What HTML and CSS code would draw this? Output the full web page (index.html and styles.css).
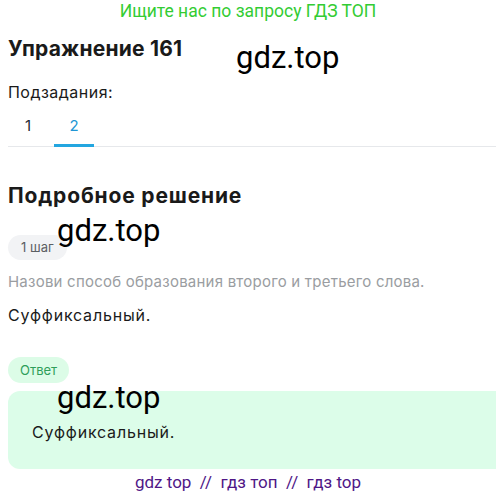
FILE: index.html
```html
<!DOCTYPE html>
<html lang="ru">
<head>
    <meta charset="UTF-8">
    <meta name="viewport" content="width=device-width, initial-scale=1.0">
    <title>Упражнение 161</title>
    <link rel="stylesheet" href="styles.css">
</head>
<body>

    <div class="banner">Ищите нас по запросу ГДЗ ТОП</div>

    <div class="page">
        <h1>Упражнение 161</h1>
        <span class="mark mark-top">gdz.top</span>

        <div class="subtasks">
            <p class="subtasks-title">Подзадания:</p>
            <div class="tabs">
                <span class="tab">1</span>
                <span class="tab active">2</span>
            </div>
        </div>

        <h2>Подробное решение</h2>

        <div class="step">
            <span class="mark mark-step">gdz.top</span>
            <span class="pill">1 шаг</span>
            <p class="hint">Назови способ образования второго и третьего слова.</p>
            <p class="text">Суффиксальный.</p>
        </div>

        <div class="answer">
            <span class="pill pill-green">Ответ</span>
            <div class="answer-box">
                <span class="mark mark-answer">gdz.top</span>
                <p class="text">Суффиксальный.</p>
            </div>
        </div>
    </div>

    <div class="footer">gdz top &nbsp;// &nbsp;гдз топ &nbsp;// &nbsp;гдз top</div>

</body>
</html>
```

FILE: styles.css
```css
/* ====== base ====== */
* {
    margin: 0;
    padding: 0;
    box-sizing: border-box;
}
body {
    background: #fff;
    color: #1a1a1a;
    font-family: 'Inter', 'Roboto', sans-serif;
    width: 496px;
    height: 496px;
    overflow: hidden;
    position: relative;
}

.banner {
    height: 22px;
    line-height: 22px;
    text-align: center;
    font-family: 'Roboto', sans-serif;
    font-size: 17.5px;
    color: #33cc33;
}

.page {
    position: relative;
    padding-left: 8px;
}

/* watermark */
.mark {
    position: absolute;
    font-family: 'Roboto', sans-serif;
    font-size: 31px;
    line-height: 1;
    color: #000;
}
.mark-top {
    left: 236px;
    top: 5px;
}
.mark-step {
    left: 49px;
    top: -20px;
}
.mark-answer {
    left: 49px;
    top: -9px;
}

h1 {
    font-size: 21px;
    font-weight: 700;
    line-height: 24px;
    margin-top: 15px;
    letter-spacing: 0.01em;
}

/* ====== subtasks ====== */
.subtasks-title {
    font-size: 16px;
    line-height: 20px;
    margin-top: 21px;
    letter-spacing: 0.03em;
}

.tabs {
    display: flex;
    gap: 6px;
    margin-top: 14px;
    border-bottom: 1px solid #e6e8eb;
}
.tab {
    width: 40px;
    text-align: center;
    font-size: 15px;
    line-height: 20px;
    padding-bottom: 8px;
    color: #1f2a33;
    border-bottom: 3px solid transparent;
    margin-bottom: -1px;
}
.tab.active {
    color: #2196d4;
    border-bottom-color: #23a6e0;
}

h2 {
    font-size: 21px;
    font-weight: 700;
    line-height: 24px;
    margin-top: 37px;
    letter-spacing: 0.04em;
}

/* ====== step ====== */
.step {
    position: relative;
    margin-top: 27px;
}

.pill {
    display: inline-block;
    height: 25px;
    line-height: 25px;
    padding: 0 13px;
    border-radius: 13px;
    background: #f2f3f5;
    color: #5c5f63;
    font-size: 13px;
}
.pill-green {
    height: 26px;
    line-height: 26px;
    padding: 0 12px;
    background: #dcfce7;
    color: #2e9e5a;
}

.hint {
    margin-top: 12px;
    font-size: 15px;
    line-height: 20px;
    color: #9a9da1;
    letter-spacing: 0.015em;
}

.text {
    font-size: 16px;
    line-height: 20px;
    margin-top: 13px;
    letter-spacing: 0.05em;
}

/* ====== answer ====== */
.answer {
    margin-top: 32px;
}

.answer-box {
    position: relative;
    margin-top: 8px;
    height: 78px;
    padding: 31px 24px 0;
    background: #dcfde9;
    border-radius: 12px 0 0 12px;
}
.answer-box .text {
    margin-top: 0;
}

.footer {
    margin-top: 2px;
    text-align: center;
    font-family: 'Roboto', sans-serif;
    font-size: 17px;
    line-height: 22px;
    color: #4f1787;
}
```
